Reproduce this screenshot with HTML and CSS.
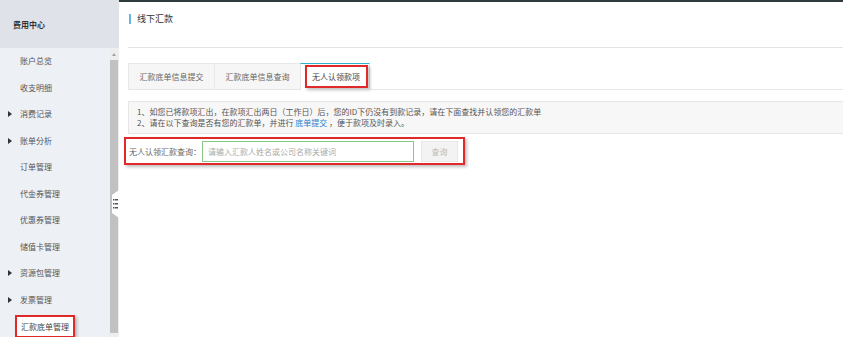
FILE: index.html
```html
<!DOCTYPE html>
<html>
<head>
    <meta http-equiv="Content-Type" content="text/html; charset=utf-8" />
    <title>线下汇款</title>
    <link rel="stylesheet" href="styles.css">
</head>
<body>
<div class="page">
    <!-- 左侧菜单 -->
    <div class="sidebar">
        <div class="side-head">费用中心</div>
        <div class="side-body">
            <ul class="menu">
                <li>账户总览</li>
                <li>收支明细</li>
                <li class="sub">消费记录</li>
                <li class="sub">账单分析</li>
                <li>订单管理</li>
                <li>代金券管理</li>
                <li>优惠券管理</li>
                <li>储值卡管理</li>
                <li class="sub">资源包管理</li>
                <li class="sub">发票管理</li>
                <li><span class="mark">汇款底单管理</span></li>
            </ul>
            <div class="scrollbar">
                <div class="arrow"></div>
                <div class="thumb"></div>
            </div>
            <div class="toggle">
                <svg width="9" height="28" viewBox="0 0 9 28">
                    <polygon points="2,5 9,0 9,28 2,23" fill="#fff"/>
                    <rect x="3" y="9" width="1.5" height="1.5" fill="#555"/>
                    <rect x="5" y="9" width="3" height="1.5" fill="#555"/>
                    <rect x="3" y="13" width="1.5" height="1.5" fill="#555"/>
                    <rect x="5" y="13" width="3" height="1.5" fill="#555"/>
                    <rect x="3" y="17" width="1.5" height="1.5" fill="#555"/>
                    <rect x="5" y="17" width="3" height="1.5" fill="#555"/>
                </svg>
            </div>
        </div>
    </div>
    <!-- 右侧内容 -->
    <div class="main">
        <div class="title"><span class="bar"></span>线下汇款</div>
        <div class="tabs">
            <div class="tab">汇款底单信息提交</div>
            <div class="tab">汇款底单信息查询</div>
            <div class="tab active"><span class="mark">无人认领款项</span></div>
        </div>
        <div class="notice">
            <p>1、如您已将款项汇出，在款项汇出两日（工作日）后，您的ID下仍没有到款记录，请在下面查找并认领您的汇款单</p>
            <p>2、请在以下查询是否有您的汇款单，并进行 <a href="#">底单提交</a> ，便于款项及时录入。</p>
        </div>
        <div class="search">
            <label>无人认领汇款查询：</label>
            <input type="text" placeholder="请输入汇款人姓名或公司名称关键词">
            <button>查询</button>
        </div>
    </div>
</div>
</body>
</html>
```

FILE: styles.css
```css
* {
    margin: 0;
    padding: 0;
    box-sizing: border-box;
}
body {
    font-family: "Noto Sans CJK SC", "Noto Sans", sans-serif;
    font-size: 8px;
    color: #555;
    background: #fff;
    overflow: hidden;
}
.page {
    display: flex;
    height: 337px;
}
/* 左侧菜单 */
.sidebar {
    width: 119px;
    display: flex;
    flex-direction: column;
    background: #edf0f4;
}
.side-head {
    height: 48px;
    line-height: 50px;
    padding-left: 13px;
    background: #dfe3e9;
    color: #333;
    font-weight: bold;
}
.side-body {
    flex: 1;
    display: flex;
    position: relative;
}
.menu {
    flex: 1;
    list-style: none;
}
.menu li {
    height: 26.5px;
    line-height: 26.5px;
    padding-left: 20px;
    position: relative;
    color: #555;
    white-space: nowrap;
}
.menu li.sub:before {
    content: "";
    position: absolute;
    left: 8px;
    top: 10px;
    border-left: 4px solid #333;
    border-top: 3px solid transparent;
    border-bottom: 3px solid transparent;
}
.menu .mark {
    display: inline-block;
    margin-left: -5px;
    margin-top: 2px;
    padding: 0 4px;
    height: 23px;
    line-height: 20px;
    background: #fff;
    border: 2px solid #e02a2a;
    box-shadow: 2px 2px 3px rgba(0,0,0,0.25);
    color: #444;
}
.scrollbar {
    width: 10px;
    display: flex;
    flex-direction: column;
    background: #eeeeee;
    padding: 2px 1px 7px;
}
.scrollbar .arrow {
    height: 10px;
    position: relative;
}
.scrollbar .arrow:before {
    content: "";
    position: absolute;
    left: 2px;
    top: 3px;
    border-bottom: 3px solid #a3a3a3;
    border-left: 2px solid transparent;
    border-right: 2px solid transparent;
}
.scrollbar .thumb {
    flex: 1;
    background: #c1c1c1;
}
.toggle {
    position: absolute;
    right: 0;
    top: 142px;
    width: 9px;
    height: 28px;
}
.toggle svg {
    display: block;
}
/* 右侧内容 */
.main {
    flex: 1;
    border-top: 2px solid #2f3a3c;
    padding-left: 9px;
}
.title {
    height: 46px;
    border-bottom: 1px solid #e3e3e3;
    display: flex;
    align-items: center;
    font-size: 9px;
    color: #333;
    padding-bottom: 12px;
}
.title .bar {
    width: 2px;
    height: 10px;
    background: #63b8e6;
    margin: 0 6px 0 1px;
}
.tabs {
    margin-top: 15px;
    height: 27px;
    display: flex;
    border-bottom: 1px solid #e6e6e6;
}
.tab {
    width: 86px;
    height: 26px;
    line-height: 25px;
    text-align: center;
    white-space: nowrap;
    background: #f6f6f6;
    border: 1px solid #e8e8e8;
    border-bottom: none;
    border-right: none;
    color: #666;
}
.tab.active {
    width: 70px;
    background: #fff;
    border-top: 1px solid #2db2cf;
    border-right: 1px solid #e8e8e8;
    height: 27px;
    padding-left: 4px;
    text-align: left;
}
.tab .mark {
    display: inline-block;
    height: 23px;
    line-height: 19px;
    padding: 0 6px 0 5px;
    border: 2px solid #e02a2a;
    box-shadow: 2px 2px 3px rgba(0,0,0,0.25);
    color: #444;
}
.notice {
    margin-top: 11px;
    height: 33px;
    padding: 4px 0 0 8px;
    background: #f7f7f7;
    border: 1px solid #e6e6e6;
    border-right: none;
    line-height: 11px;
}
.notice a {
    color: #1b7fd0;
    text-decoration: none;
}
.search {
    margin: 3px 0 0 -4px;
    width: 341px;
    height: 28px;
    display: flex;
    align-items: center;
    padding-left: 3px;
    border: 2px solid #e02a2a;
    box-shadow: 2px 2px 3px rgba(0,0,0,0.25);
    background: #fff;
}
.search label {
    color: #666;
}
.search input {
    width: 212px;
    height: 21px;
    margin-left: 1px;
    padding-left: 5px;
    border: 1px solid #84c884;
    font-family: inherit;
    font-size: 8px;
    outline: none;
}
.search input::placeholder {
    color: #aaa;
}
.search button {
    width: 37px;
    height: 21px;
    margin-left: 7px;
    background: #f3f3f3;
    border: 1px solid #e8e8e8;
    color: #bbb;
    font-family: inherit;
    font-size: 8px;
}
```
